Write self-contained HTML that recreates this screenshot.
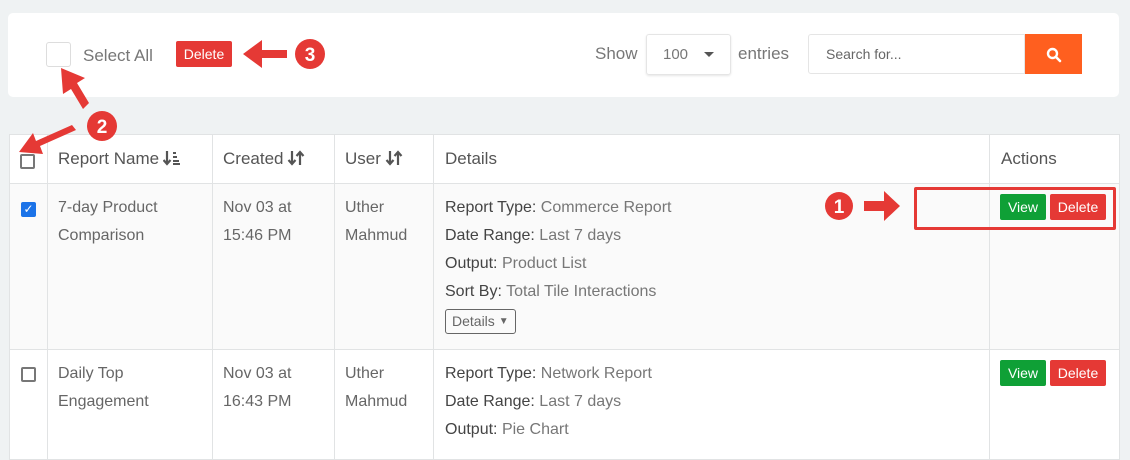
<!DOCTYPE html>
<html><head><meta charset="utf-8"><style>
*{box-sizing:border-box;margin:0;padding:0}
body{width:1130px;height:454px;background:#eff2f3;font-family:"Liberation Sans",sans-serif;position:relative;overflow:hidden;color:#666}
.a{position:absolute}
.card{left:8px;top:13px;width:1111px;height:84px;background:#fff;border-radius:5px}
.btnr{background:#e53935;color:#fff;font-size:14px;border-radius:2px;text-align:center}
.btng{background:#0fa036;color:#fff;font-size:14px;border-radius:2px;text-align:center}
table{position:absolute;left:9px;top:134px;border-collapse:collapse;background:#fff}
td,th{border:1px solid #e1e3e4;vertical-align:top;text-align:left;font-size:16px;font-weight:normal;line-height:28px}
th{height:49px;vertical-align:middle;color:#555;font-size:17px}
.cb{width:15px;height:15px;border:2px solid #777;border-radius:2px;display:inline-block}
.k{color:#444}.v{color:#777}
.si{display:inline-block;vertical-align:-2px;margin-left:4px}
</style></head><body>
<div class="a card"></div>
<div class="a" style="left:46px;top:42px;width:25px;height:25px;border:1px solid #ddd;border-radius:3px"></div>
<div class="a" style="left:83px;top:46px;font-size:17px;color:#777">Select All</div>
<div class="a btnr" style="left:176px;top:41px;width:56px;height:26px;line-height:26px">Delete</div>
<div class="a" style="left:595px;top:44px;font-size:17px;color:#777">Show</div>
<div class="a" style="left:646px;top:34px;width:85px;height:41px;border:1px solid #e5e5e5;border-radius:3px;box-shadow:0 1px 2px rgba(0,0,0,.1)"><span class="a" style="left:16px;top:11px;font-size:15px;color:#777">100</span><span class="a" style="left:57px;top:17px;border-left:5px solid transparent;border-right:5px solid transparent;border-top:5px solid #555"></span></div>
<div class="a" style="left:738px;top:44px;font-size:17px;color:#777">entries</div>
<div class="a" style="left:808px;top:34px;width:217px;height:40px;border:1px solid #e5e5e5;border-radius:3px 0 0 3px"><span class="a" style="left:17px;top:11px;font-size:14px;color:#666">Search for...</span></div>
<div class="a" style="left:1025px;top:34px;width:57px;height:40px;background:#ff5f1f"><svg class="a" style="left:21px;top:13px" width="16" height="16" viewBox="0 0 16 16"><circle cx="6.5" cy="6.5" r="4.5" stroke="#fff" stroke-width="2.4" fill="none"/><path d="M10 10l4 4" stroke="#fff" stroke-width="2.6" stroke-linecap="round"/></svg></div>
<table>
<tr><th style="width:38px;padding-left:10px"><span class="cb" style="margin-top:4px;vertical-align:middle"></span></th>
<th style="width:165px;padding-left:10px">Report Name<svg class="si" width="18" height="16" viewBox="0 0 18 16"><path d="M4 1v12M0.5 10l3.5 4 3.5-4" stroke="#555" stroke-width="2.2" fill="none"/><path d="M10 3h3M10 7h4M10 11h6M10 14h7" stroke="#555" stroke-width="2"/></svg></th>
<th style="width:122px;padding-left:10px">Created<svg class="si" width="18" height="16" viewBox="0 0 18 16"><path d="M5 1v13M1.5 10l3.5 4 3.5-4M13 15V2M9.5 6L13 2l3.5 4" stroke="#555" stroke-width="2.2" fill="none"/></svg></th>
<th style="width:99px;padding-left:10px">User<svg class="si" width="18" height="16" viewBox="0 0 18 16"><path d="M5 1v13M1.5 10l3.5 4 3.5-4M13 15V2M9.5 6L13 2l3.5 4" stroke="#555" stroke-width="2.2" fill="none"/></svg></th>
<th style="width:556px;padding-left:11px">Details</th>
<th style="width:130px;padding-left:11px">Actions</th></tr>
<tr style="background:#fafafa"><td style="height:166px;padding:11px 0 0 11px"><span style="display:inline-block;width:15px;height:15px;background:#1b73e8;border-radius:2px;color:#fff;font-size:12px;line-height:15px;text-align:center;margin-top:6px">✓</span></td>
<td style="padding:10px 10px">7-day Product Comparison</td>
<td style="padding:10px 10px">Nov 03 at 15:46 PM</td>
<td style="padding:10px 10px">Uther Mahmud</td>
<td style="padding:10px 11px"><span class="k">Report Type:</span> <span class="v">Commerce Report</span><br><span class="k">Date Range:</span> <span class="v">Last 7 days</span><br><span class="k">Output:</span> <span class="v">Product List</span><br><span class="k">Sort By:</span> <span class="v">Total Tile Interactions</span><br><span style="display:inline-block;margin-top:3px;border:1px solid #666;border-radius:3px;font-size:14px;line-height:23px;padding:0 6px;color:#666">Details <span style="font-size:10px;vertical-align:2px">▼</span></span></td>
<td></td></tr>
<tr><td style="height:110px;padding:11px 0 0 11px"><span class="cb" style="margin-top:6px;width:15px;height:15px"></span></td>
<td style="padding:10px 10px">Daily Top Engagement</td>
<td style="padding:10px 10px">Nov 03 at 16:43 PM</td>
<td style="padding:10px 10px">Uther Mahmud</td>
<td style="padding:10px 11px"><span class="k">Report Type:</span> <span class="v">Network Report</span><br><span class="k">Date Range:</span> <span class="v">Last 7 days</span><br><span class="k">Output:</span> <span class="v">Pie Chart</span></td>
<td></td></tr>
</table>
<div class="a btng" style="left:1000px;top:194px;width:46px;height:26px;line-height:26px">View</div>
<div class="a btnr" style="left:1050px;top:194px;width:56px;height:26px;line-height:26px">Delete</div>
<div class="a btng" style="left:1000px;top:360px;width:46px;height:26px;line-height:26px">View</div>
<div class="a btnr" style="left:1050px;top:360px;width:56px;height:26px;line-height:26px">Delete</div>
<div class="a" style="left:914px;top:187px;width:202px;height:43px;border:3px solid #e53935;border-radius:2px"></div>
<svg class="a" style="left:0;top:0" width="1130" height="454">
<g fill="#e53935">
<circle cx="839" cy="206" r="14"/><path d="M864 201h20v-10l16 15-16 15v-10h-20z"/>
<circle cx="102" cy="126" r="15"/><circle cx="310" cy="54" r="15"/>
<path d="M287 50h-25v-10l-19 14 19 14v-10h25z"/>
<path d="M89 103l-12-20 8-5-24-10 2 26 8-5 12 20z"/>
<path d="M72 125l-36 16-3-8-14 19 24 2-3-8 36-16z"/>
</g>
<g fill="#fff" font-family="Liberation Sans" font-weight="bold" font-size="19" text-anchor="middle">
<text x="839" y="213">1</text><text x="102" y="133">2</text><text x="310" y="61">3</text></g>
</svg>
</body></html>
